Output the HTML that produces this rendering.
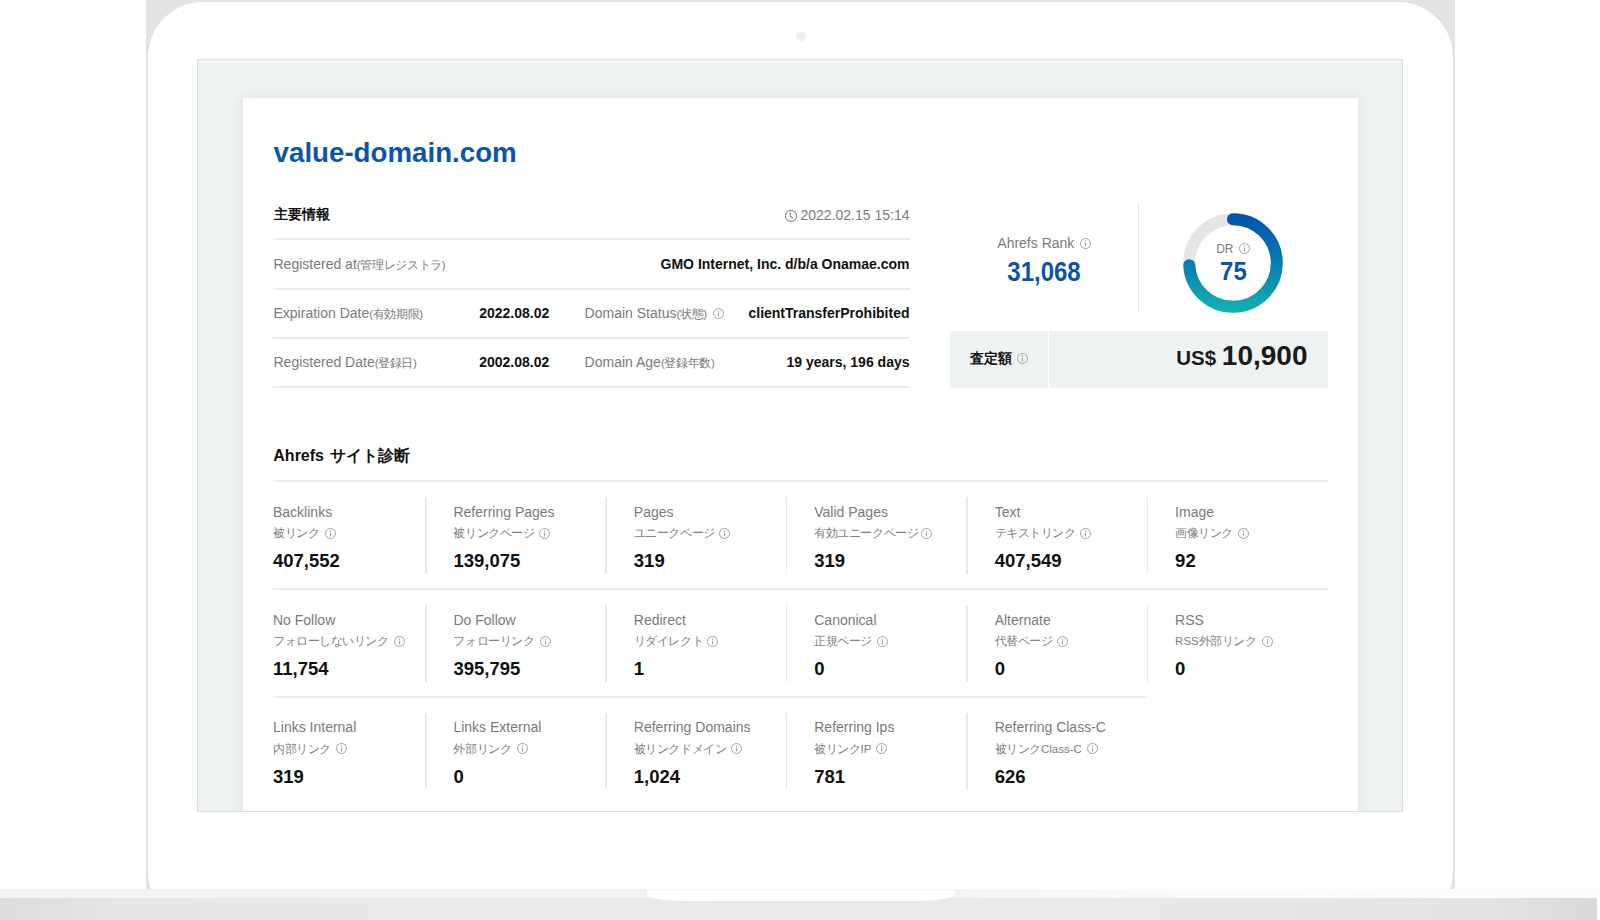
<!DOCTYPE html>
<html><head><meta charset="utf-8">
<style>
*{box-sizing:border-box;margin:0;padding:0}
html,body{width:1600px;height:920px;overflow:hidden;background:#fff;font-family:"Liberation Sans",sans-serif;color:#111}
#lid{position:absolute;left:146px;top:0;width:1309px;height:889px;background:#e3e3e3}
#lidw{position:absolute;left:2px;top:2px;width:1305px;height:887px;background:#fff;border-radius:55px 55px 4px 4px/55px 55px 23px 23px}
#cam{position:absolute;left:796px;top:31.5px;width:9.5px;height:9.5px;border-radius:50%;background:#f0f0f0}
#base1{position:absolute;left:0;top:889px;width:1600px;height:9px;background:linear-gradient(90deg,#f3f3f3 0%,#f3f3f3 59%,#f6f6f6 61%,#fafafa 74%,#fbfbfb 100%)}
#base2{position:absolute;left:0;top:898px;width:1600px;height:22px;background:linear-gradient(90deg,#dcdcdc 0%,#e5e5e5 7%,#eaeaea 30%,#e9e9e9 70%,#e3e3e3 93%,#d9d9d9 99.8%,#fff 99.8%)}
#notch{position:absolute;left:647px;top:889px;width:307px;height:12px;background:#fff;border-top:1px solid #f1f1f1;border-radius:0 0 40px 40px/0 0 6px 6px}
#screen{position:absolute;left:197px;top:59px;width:1206px;height:753px;background:#eff2f3;border:1px solid #dedede;overflow:hidden}
#pg{position:absolute;left:-198px;top:-60px;width:1600px;height:920px}
#card{position:absolute;left:243px;top:98px;width:1115px;height:760px;background:#fff;box-shadow:0 0 12px rgba(0,0,0,0.08)}
.t{position:absolute;white-space:nowrap;line-height:1}
.sm{font-size:11.5px;letter-spacing:-0.35px}
.ln{position:absolute}
.ic{position:absolute;overflow:visible}
.ii{display:inline-block;vertical-align:baseline;margin-left:5px;position:relative}
</style></head><body>
<div id="lid"><div id="lidw"></div></div>
<div id="cam"></div>
<div id="base1"></div>
<div id="base2"></div>
<div id="notch"></div>
<div id="screen"><div id="pg">
<div id="card"></div>
<div class="t " style="left:273.60px;top:138.75px;font-size:27.7px;font-weight:bold;color:#0b55a8">value-domain.com</div>
<div class="t " style="left:273.50px;top:207.45px;font-size:14px;font-weight:bold;color:#111">主要情報</div>
<div class="t " style="right:690.50px;top:208.15px;font-size:14px;color:#7a7a7a">2022.02.15 15:14</div>
<svg class="ic" style="left:784.2px;top:208.6px" width="14" height="14" viewBox="-7 -7 14 14"><circle r="5.6" fill="none" stroke="#8a8a8a" stroke-width="1.1"/><path d="M-0.6 -3.4V0.2L2 2.3" fill="none" stroke="#8a8a8a" stroke-width="1.1"/></svg>
<div class="ln" style="left:273px;top:238.00px;width:636.5px;height:2px;background:#ececec"></div>
<div class="ln" style="left:273px;top:287.60px;width:636.5px;height:2px;background:#ececec"></div>
<div class="ln" style="left:273px;top:336.90px;width:636.5px;height:2px;background:#ececec"></div>
<div class="ln" style="left:273px;top:386.20px;width:636.5px;height:2px;background:#ececec"></div>
<div class="t " style="left:273.50px;top:256.55px;font-size:14px;color:#7a7a7a">Registered at<span class="sm">(管理レジストラ)</span></div>
<div class="t " style="right:690.50px;top:256.75px;font-size:14px;font-weight:bold;color:#111">GMO Internet, Inc. d/b/a Onamae.com</div>
<div class="t " style="left:273.50px;top:306.25px;font-size:14px;color:#7a7a7a">Expiration Date<span class="sm">(有効期限)</span></div>
<div class="t " style="left:479.20px;top:306.25px;font-size:14px;font-weight:bold;color:#111">2022.08.02</div>
<div class="t " style="left:584.60px;top:306.25px;font-size:14px;color:#7a7a7a">Domain Status<span class="sm">(状態)</span></div>
<svg class="ic" style="left:711.80px;top:307.10px" width="13" height="13" viewBox="-6.5 -6.5 13 13"><circle r="5.0" fill="none" stroke="#a3a3a3" stroke-width="1"/><circle cy="-2.4" r="0.75" fill="#a3a3a3"/><path d="M0 -1V3" stroke="#a3a3a3" stroke-width="1.1"/></svg>
<div class="t " style="right:690.50px;top:306.25px;font-size:14px;font-weight:bold;color:#111">clientTransferProhibited</div>
<div class="t " style="left:273.50px;top:354.85px;font-size:14px;color:#7a7a7a">Registered Date<span class="sm">(登録日)</span></div>
<div class="t " style="left:479.20px;top:354.85px;font-size:14px;font-weight:bold;color:#111">2002.08.02</div>
<div class="t " style="left:584.60px;top:354.85px;font-size:14px;color:#7a7a7a">Domain Age<span class="sm">(登録年数)</span></div>
<div class="t " style="right:690.50px;top:354.85px;font-size:14px;font-weight:bold;color:#111">19 years, 196 days</div>
<div class="t " style="left:997.30px;top:235.75px;font-size:14px;color:#7a7a7a">Ahrefs Rank</div>
<svg class="ic" style="left:1079.00px;top:236.70px" width="13" height="13" viewBox="-6.5 -6.5 13 13"><circle r="5.0" fill="none" stroke="#a3a3a3" stroke-width="1"/><circle cy="-2.4" r="0.75" fill="#a3a3a3"/><path d="M0 -1V3" stroke="#a3a3a3" stroke-width="1.1"/></svg>
<div class="t " style="left:744.00px;width:600px;text-align:center;top:260.98px;font-size:24px;font-weight:bold;color:#0b55a8;transform:scaleY(1.13);transform-origin:50% 84.65%">31,068</div>
<div class="ln" style="left:1137.55px;top:203px;width:1.5px;height:109.5px;background:#e8e8e8"></div>
<svg class="ic" style="left:1177.0px;top:207.0px" width="112" height="112" viewBox="-56 -56 112 112"><defs><linearGradient id="dg" gradientUnits="userSpaceOnUse" x1="0" y1="-49.8" x2="0" y2="49.8"><stop offset="0" stop-color="#0052ae"/><stop offset="0.5" stop-color="#097cb0"/><stop offset="1" stop-color="#12b4ae"/></linearGradient></defs><circle r="43.8" fill="none" stroke="#e5e5e5" stroke-width="12"/><path d="M0 -43.8 A43.8 43.8 0 1 1 -43.740 2.292" fill="none" stroke="url(#dg)" stroke-width="12" stroke-linecap="round"/></svg>
<div class="t " style="left:1216.20px;top:242.64px;font-size:12px;color:#7a7a7a">DR</div>
<svg class="ic" style="left:1238.20px;top:241.70px" width="13" height="13" viewBox="-6.5 -6.5 13 13"><circle r="5.0" fill="none" stroke="#a3a3a3" stroke-width="1"/><circle cy="-2.4" r="0.75" fill="#a3a3a3"/><path d="M0 -1V3" stroke="#a3a3a3" stroke-width="1.1"/></svg>
<div class="t " style="left:933.40px;width:600px;text-align:center;top:259.98px;font-size:24px;font-weight:bold;color:#0b55a8;transform:scaleY(1.05);transform-origin:50% 84.65%">75</div>
<div class="ln" style="left:950px;top:331px;width:377.6px;height:56.5px;background:#eff2f3"></div>
<div class="ln" style="left:1048px;top:331px;width:1px;height:56.5px;background:#fff"></div>
<div class="t " style="left:970.00px;top:350.65px;font-size:14px;font-weight:bold;color:#111">査定額</div>
<svg class="ic" style="left:1016.30px;top:351.70px" width="13" height="13" viewBox="-6.5 -6.5 13 13"><circle r="5.0" fill="none" stroke="#a3a3a3" stroke-width="1"/><circle cy="-2.4" r="0.75" fill="#a3a3a3"/><path d="M0 -1V3" stroke="#a3a3a3" stroke-width="1.1"/></svg>
<div class="t " style="right:292.50px;top:342.30px;font-size:28px;font-weight:bold;color:#1a1a1a"><span style="font-size:20.5px">US$ </span>10,900</div>
<div class="t " style="left:273.30px;top:448.16px;font-size:16px;font-weight:bold;color:#111">Ahrefs<span style="margin-left:2px"> </span>サイト診断</div>
<div class="ln" style="left:273px;top:480.40px;width:1054.5px;height:2px;background:#ececec"></div>
<div class="t " style="left:273.00px;top:504.65px;font-size:14px;color:#7a7a7a">Backlinks</div>
<div class="t " style="left:273.00px;top:528.07px;font-size:11.5px;color:#808080;letter-spacing:-0.45px">被リンク</div>
<svg class="ic" style="left:323.90px;top:526.90px" width="13" height="13" viewBox="-6.5 -6.5 13 13"><circle r="5.0" fill="none" stroke="#a3a3a3" stroke-width="1"/><circle cy="-2.4" r="0.75" fill="#a3a3a3"/><path d="M0 -1V3" stroke="#a3a3a3" stroke-width="1.1"/></svg>
<div class="t " style="left:273.00px;top:551.84px;font-size:18.5px;font-weight:bold;color:#111">407,552</div>
<div class="t " style="left:453.42px;top:504.65px;font-size:14px;color:#7a7a7a">Referring Pages</div>
<div class="t " style="left:453.42px;top:528.07px;font-size:11.5px;color:#808080;letter-spacing:-0.45px">被リンクページ</div>
<svg class="ic" style="left:537.50px;top:526.90px" width="13" height="13" viewBox="-6.5 -6.5 13 13"><circle r="5.0" fill="none" stroke="#a3a3a3" stroke-width="1"/><circle cy="-2.4" r="0.75" fill="#a3a3a3"/><path d="M0 -1V3" stroke="#a3a3a3" stroke-width="1.1"/></svg>
<div class="t " style="left:453.42px;top:551.84px;font-size:18.5px;font-weight:bold;color:#111">139,075</div>
<div class="ln" style="left:425.07px;top:497.3px;width:1.5px;height:76.30000000000001px;background:#e8e8e8"></div>
<div class="t " style="left:633.84px;top:504.65px;font-size:14px;color:#7a7a7a">Pages</div>
<div class="t " style="left:633.84px;top:528.07px;font-size:11.5px;color:#808080;letter-spacing:-0.45px">ユニークページ</div>
<svg class="ic" style="left:717.90px;top:526.90px" width="13" height="13" viewBox="-6.5 -6.5 13 13"><circle r="5.0" fill="none" stroke="#a3a3a3" stroke-width="1"/><circle cy="-2.4" r="0.75" fill="#a3a3a3"/><path d="M0 -1V3" stroke="#a3a3a3" stroke-width="1.1"/></svg>
<div class="t " style="left:633.84px;top:551.84px;font-size:18.5px;font-weight:bold;color:#111">319</div>
<div class="ln" style="left:605.49px;top:497.3px;width:1.5px;height:76.30000000000001px;background:#e8e8e8"></div>
<div class="t " style="left:814.26px;top:504.65px;font-size:14px;color:#7a7a7a">Valid Pages</div>
<div class="t " style="left:814.26px;top:528.07px;font-size:11.5px;color:#808080;letter-spacing:-0.45px">有効ユニークページ</div>
<svg class="ic" style="left:920.40px;top:526.90px" width="13" height="13" viewBox="-6.5 -6.5 13 13"><circle r="5.0" fill="none" stroke="#a3a3a3" stroke-width="1"/><circle cy="-2.4" r="0.75" fill="#a3a3a3"/><path d="M0 -1V3" stroke="#a3a3a3" stroke-width="1.1"/></svg>
<div class="t " style="left:814.26px;top:551.84px;font-size:18.5px;font-weight:bold;color:#111">319</div>
<div class="ln" style="left:785.91px;top:497.3px;width:1.5px;height:76.30000000000001px;background:#e8e8e8"></div>
<div class="t " style="left:994.68px;top:504.65px;font-size:14px;color:#7a7a7a">Text</div>
<div class="t " style="left:994.68px;top:528.07px;font-size:11.5px;color:#808080;letter-spacing:-0.45px">テキストリンク</div>
<svg class="ic" style="left:1079.00px;top:526.90px" width="13" height="13" viewBox="-6.5 -6.5 13 13"><circle r="5.0" fill="none" stroke="#a3a3a3" stroke-width="1"/><circle cy="-2.4" r="0.75" fill="#a3a3a3"/><path d="M0 -1V3" stroke="#a3a3a3" stroke-width="1.1"/></svg>
<div class="t " style="left:994.68px;top:551.84px;font-size:18.5px;font-weight:bold;color:#111">407,549</div>
<div class="ln" style="left:966.33px;top:497.3px;width:1.5px;height:76.30000000000001px;background:#e8e8e8"></div>
<div class="t " style="left:1175.10px;top:504.65px;font-size:14px;color:#7a7a7a">Image</div>
<div class="t " style="left:1175.10px;top:528.07px;font-size:11.5px;color:#808080;letter-spacing:-0.45px">画像リンク</div>
<svg class="ic" style="left:1237.40px;top:526.90px" width="13" height="13" viewBox="-6.5 -6.5 13 13"><circle r="5.0" fill="none" stroke="#a3a3a3" stroke-width="1"/><circle cy="-2.4" r="0.75" fill="#a3a3a3"/><path d="M0 -1V3" stroke="#a3a3a3" stroke-width="1.1"/></svg>
<div class="t " style="left:1175.10px;top:551.84px;font-size:18.5px;font-weight:bold;color:#111">92</div>
<div class="ln" style="left:1146.75px;top:497.3px;width:1.5px;height:76.30000000000001px;background:#e8e8e8"></div>
<div class="t " style="left:273.00px;top:612.65px;font-size:14px;color:#7a7a7a">No Follow</div>
<div class="t " style="left:273.00px;top:636.07px;font-size:11.5px;color:#808080;letter-spacing:-0.45px">フォローしないリンク</div>
<svg class="ic" style="left:392.60px;top:634.80px" width="13" height="13" viewBox="-6.5 -6.5 13 13"><circle r="5.0" fill="none" stroke="#a3a3a3" stroke-width="1"/><circle cy="-2.4" r="0.75" fill="#a3a3a3"/><path d="M0 -1V3" stroke="#a3a3a3" stroke-width="1.1"/></svg>
<div class="t " style="left:273.00px;top:659.84px;font-size:18.5px;font-weight:bold;color:#111">11,754</div>
<div class="t " style="left:453.42px;top:612.65px;font-size:14px;color:#7a7a7a">Do Follow</div>
<div class="t " style="left:453.42px;top:636.07px;font-size:11.5px;color:#808080;letter-spacing:-0.45px">フォローリンク</div>
<svg class="ic" style="left:538.50px;top:634.80px" width="13" height="13" viewBox="-6.5 -6.5 13 13"><circle r="5.0" fill="none" stroke="#a3a3a3" stroke-width="1"/><circle cy="-2.4" r="0.75" fill="#a3a3a3"/><path d="M0 -1V3" stroke="#a3a3a3" stroke-width="1.1"/></svg>
<div class="t " style="left:453.42px;top:659.84px;font-size:18.5px;font-weight:bold;color:#111">395,795</div>
<div class="ln" style="left:425.07px;top:605.3px;width:1.5px;height:76.30000000000007px;background:#e8e8e8"></div>
<div class="t " style="left:633.84px;top:612.65px;font-size:14px;color:#7a7a7a">Redirect</div>
<div class="t " style="left:633.84px;top:636.07px;font-size:11.5px;color:#808080;letter-spacing:-0.45px">リダイレクト</div>
<svg class="ic" style="left:706.00px;top:634.80px" width="13" height="13" viewBox="-6.5 -6.5 13 13"><circle r="5.0" fill="none" stroke="#a3a3a3" stroke-width="1"/><circle cy="-2.4" r="0.75" fill="#a3a3a3"/><path d="M0 -1V3" stroke="#a3a3a3" stroke-width="1.1"/></svg>
<div class="t " style="left:633.84px;top:659.84px;font-size:18.5px;font-weight:bold;color:#111">1</div>
<div class="ln" style="left:605.49px;top:605.3px;width:1.5px;height:76.30000000000007px;background:#e8e8e8"></div>
<div class="t " style="left:814.26px;top:612.65px;font-size:14px;color:#7a7a7a">Canonical</div>
<div class="t " style="left:814.26px;top:636.07px;font-size:11.5px;color:#808080;letter-spacing:-0.45px">正規ページ</div>
<svg class="ic" style="left:876.00px;top:634.80px" width="13" height="13" viewBox="-6.5 -6.5 13 13"><circle r="5.0" fill="none" stroke="#a3a3a3" stroke-width="1"/><circle cy="-2.4" r="0.75" fill="#a3a3a3"/><path d="M0 -1V3" stroke="#a3a3a3" stroke-width="1.1"/></svg>
<div class="t " style="left:814.26px;top:659.84px;font-size:18.5px;font-weight:bold;color:#111">0</div>
<div class="ln" style="left:785.91px;top:605.3px;width:1.5px;height:76.30000000000007px;background:#e8e8e8"></div>
<div class="t " style="left:994.68px;top:612.65px;font-size:14px;color:#7a7a7a">Alternate</div>
<div class="t " style="left:994.68px;top:636.07px;font-size:11.5px;color:#808080;letter-spacing:-0.45px">代替ページ</div>
<svg class="ic" style="left:1056.30px;top:634.80px" width="13" height="13" viewBox="-6.5 -6.5 13 13"><circle r="5.0" fill="none" stroke="#a3a3a3" stroke-width="1"/><circle cy="-2.4" r="0.75" fill="#a3a3a3"/><path d="M0 -1V3" stroke="#a3a3a3" stroke-width="1.1"/></svg>
<div class="t " style="left:994.68px;top:659.84px;font-size:18.5px;font-weight:bold;color:#111">0</div>
<div class="ln" style="left:966.33px;top:605.3px;width:1.5px;height:76.30000000000007px;background:#e8e8e8"></div>
<div class="t " style="left:1175.10px;top:612.65px;font-size:14px;color:#7a7a7a">RSS</div>
<div class="t " style="left:1175.10px;top:636.07px;font-size:11.5px;color:#808080;letter-spacing:-0.45px"><span style="letter-spacing:0">RSS</span>外部リンク</div>
<svg class="ic" style="left:1261.10px;top:634.80px" width="13" height="13" viewBox="-6.5 -6.5 13 13"><circle r="5.0" fill="none" stroke="#a3a3a3" stroke-width="1"/><circle cy="-2.4" r="0.75" fill="#a3a3a3"/><path d="M0 -1V3" stroke="#a3a3a3" stroke-width="1.1"/></svg>
<div class="t " style="left:1175.10px;top:659.84px;font-size:18.5px;font-weight:bold;color:#111">0</div>
<div class="ln" style="left:1146.75px;top:605.3px;width:1.5px;height:76.30000000000007px;background:#e8e8e8"></div>
<div class="t " style="left:273.00px;top:720.45px;font-size:14px;color:#7a7a7a">Links Internal</div>
<div class="t " style="left:273.00px;top:743.87px;font-size:11.5px;color:#808080;letter-spacing:-0.45px">内部リンク</div>
<svg class="ic" style="left:335.10px;top:742.30px" width="13" height="13" viewBox="-6.5 -6.5 13 13"><circle r="5.0" fill="none" stroke="#a3a3a3" stroke-width="1"/><circle cy="-2.4" r="0.75" fill="#a3a3a3"/><path d="M0 -1V3" stroke="#a3a3a3" stroke-width="1.1"/></svg>
<div class="t " style="left:273.00px;top:767.64px;font-size:18.5px;font-weight:bold;color:#111">319</div>
<div class="t " style="left:453.42px;top:720.45px;font-size:14px;color:#7a7a7a">Links External</div>
<div class="t " style="left:453.42px;top:743.87px;font-size:11.5px;color:#808080;letter-spacing:-0.45px">外部リンク</div>
<svg class="ic" style="left:516.00px;top:742.30px" width="13" height="13" viewBox="-6.5 -6.5 13 13"><circle r="5.0" fill="none" stroke="#a3a3a3" stroke-width="1"/><circle cy="-2.4" r="0.75" fill="#a3a3a3"/><path d="M0 -1V3" stroke="#a3a3a3" stroke-width="1.1"/></svg>
<div class="t " style="left:453.42px;top:767.64px;font-size:18.5px;font-weight:bold;color:#111">0</div>
<div class="ln" style="left:425.07px;top:713.1px;width:1.5px;height:76.30000000000007px;background:#e8e8e8"></div>
<div class="t " style="left:633.84px;top:720.45px;font-size:14px;color:#7a7a7a">Referring Domains</div>
<div class="t " style="left:633.84px;top:743.87px;font-size:11.5px;color:#808080;letter-spacing:-0.45px">被リンクドメイン</div>
<svg class="ic" style="left:729.90px;top:742.30px" width="13" height="13" viewBox="-6.5 -6.5 13 13"><circle r="5.0" fill="none" stroke="#a3a3a3" stroke-width="1"/><circle cy="-2.4" r="0.75" fill="#a3a3a3"/><path d="M0 -1V3" stroke="#a3a3a3" stroke-width="1.1"/></svg>
<div class="t " style="left:633.84px;top:767.64px;font-size:18.5px;font-weight:bold;color:#111">1,024</div>
<div class="ln" style="left:605.49px;top:713.1px;width:1.5px;height:76.30000000000007px;background:#e8e8e8"></div>
<div class="t " style="left:814.26px;top:720.45px;font-size:14px;color:#7a7a7a">Referring Ips</div>
<div class="t " style="left:814.26px;top:743.87px;font-size:11.5px;color:#808080;letter-spacing:-0.45px">被リンク<span style="letter-spacing:0">IP</span></div>
<svg class="ic" style="left:875.10px;top:742.30px" width="13" height="13" viewBox="-6.5 -6.5 13 13"><circle r="5.0" fill="none" stroke="#a3a3a3" stroke-width="1"/><circle cy="-2.4" r="0.75" fill="#a3a3a3"/><path d="M0 -1V3" stroke="#a3a3a3" stroke-width="1.1"/></svg>
<div class="t " style="left:814.26px;top:767.64px;font-size:18.5px;font-weight:bold;color:#111">781</div>
<div class="ln" style="left:785.91px;top:713.1px;width:1.5px;height:76.30000000000007px;background:#e8e8e8"></div>
<div class="t " style="left:994.68px;top:720.45px;font-size:14px;color:#7a7a7a">Referring Class-C</div>
<div class="t " style="left:994.68px;top:743.87px;font-size:11.5px;color:#808080;letter-spacing:-0.45px">被リンク<span style="letter-spacing:0">Class-C</span></div>
<svg class="ic" style="left:1086.00px;top:742.30px" width="13" height="13" viewBox="-6.5 -6.5 13 13"><circle r="5.0" fill="none" stroke="#a3a3a3" stroke-width="1"/><circle cy="-2.4" r="0.75" fill="#a3a3a3"/><path d="M0 -1V3" stroke="#a3a3a3" stroke-width="1.1"/></svg>
<div class="t " style="left:994.68px;top:767.64px;font-size:18.5px;font-weight:bold;color:#111">626</div>
<div class="ln" style="left:966.33px;top:713.1px;width:1.5px;height:76.30000000000007px;background:#e8e8e8"></div>
<div class="ln" style="left:273px;top:587.50px;width:1054.5px;height:2px;background:#ececec"></div>
<div class="ln" style="left:273px;top:696.00px;width:874px;height:2px;background:#ececec"></div>
</div></div>
</body></html>
